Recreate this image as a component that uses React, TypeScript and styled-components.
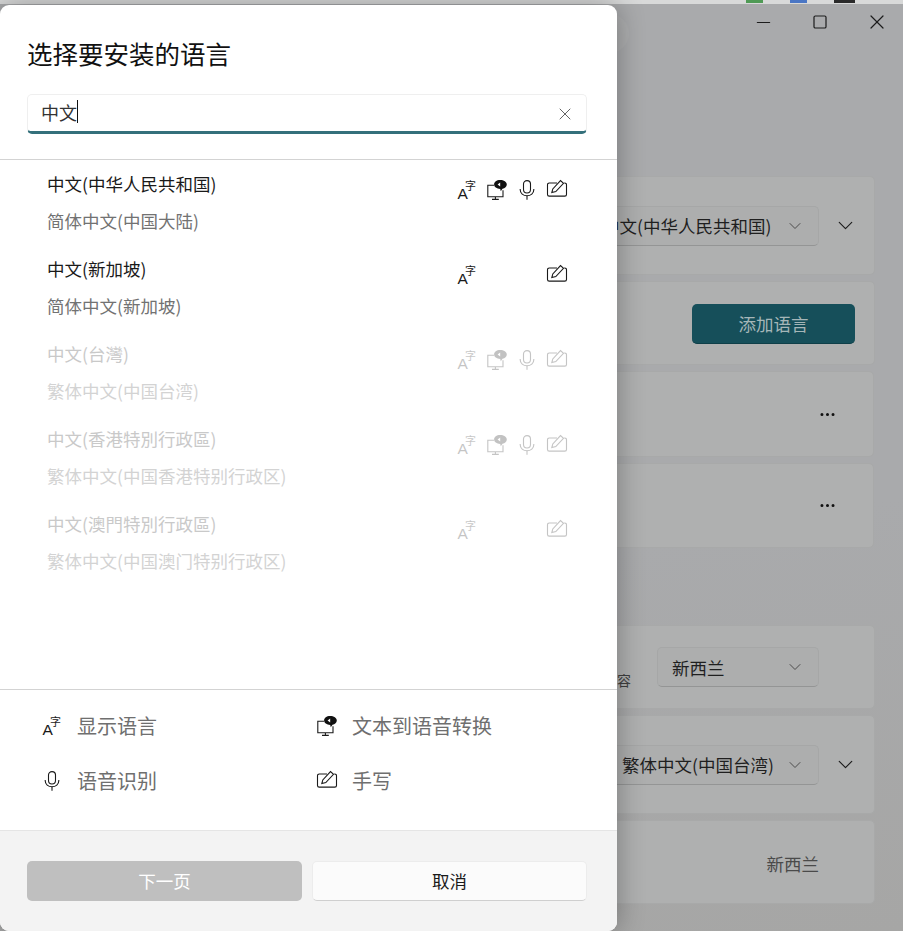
import { ChevronDown, Ellipsis, Minus, Square, X } from "lucide-react";
import styled, { createGlobalStyle } from "styled-components";

const GlobalStyle = createGlobalStyle`
  html, body {
    margin: 0;
    padding: 0;
    height: 100%;
    overflow: hidden;
    font-family: "Noto Sans CJK SC", "Liberation Sans", sans-serif;
  }
  * {
    box-sizing: border-box;
  }
`;

type Language = {
  name: string;
  sub: string;
  available: boolean;
  speech: boolean;
};

const languages: Language[] = [
  { name: "中文(中华人民共和国)", sub: "简体中文(中国大陆)", available: true, speech: true },
  { name: "中文(新加坡)", sub: "简体中文(新加坡)", available: true, speech: false },
  { name: "中文(台灣)", sub: "繁体中文(中国台湾)", available: false, speech: true },
  { name: "中文(香港特別行政區)", sub: "繁体中文(中国香港特别行政区)", available: false, speech: true },
  { name: "中文(澳門特別行政區)", sub: "繁体中文(中国澳门特别行政区)", available: false, speech: false },
];

function DisplayIcon() {
  return (
    <IconSvg width="20" height="20" viewBox="0 0 20 20">
      <text fill="#1a1a1a" fontFamily="Liberation Sans, Noto Sans CJK SC">
        <tspan x="0.5" y="19" fontSize="15.5">
          A
        </tspan>
        <tspan x="8" y="10" fontSize="11" fontFamily="Noto Sans CJK SC">
          字
        </tspan>
      </text>
    </IconSvg>
  );
}

function SpeechIcon() {
  return (
    <IconSvg width="20" height="20" viewBox="0 0 20 20" fill="none">
      <path d="M7 5.2H0.8v11.6h15.2v-6.5" stroke="#1a1a1a" strokeWidth="1.1" />
      <path d="M8.4 17v2M5 19.4h6.8" stroke="#1a1a1a" strokeWidth="1.1" />
      <path
        d="M13 0c3.9 0 6.8 2 6.8 4.5 0 2.1-1.9 3.7-4.3 4.2l-1.7 2.6-0.6-2.4c-3.4-0.1-6.1-2-6.1-4.4C7.100 2 9.600 0 13 0z"
        fill="#111"
      />
      <path d="M13.200 2.400v4.100l-2.600-2z" fill="#fff" />
    </IconSvg>
  );
}

function MicIcon() {
  return (
    <IconSvg width="20" height="20" viewBox="0 0 20 20" fill="none" stroke="#1a1a1a" strokeWidth="1.1">
      <rect x="6.5" y="0.6" width="7" height="12.4" rx="3.5" />
      <path d="M3.200 9v0.800c0 3.600 3 6 6.800 6s6.800-2.400 6.800-6V9" />
      <path d="M10 15.800v3.900" />
    </IconSvg>
  );
}

function HandwritingIcon() {
  return (
    <IconSvg width="20" height="20" viewBox="0 0 20 20" fill="none" stroke="#1a1a1a" strokeWidth="1.1">
      <path d="M10 3H2.200a1.700 1.700 0 0 0-1.700 1.700v9.700a1.700 1.700 0 0 0 1.700 1.700h15.600a1.700 1.700 0 0 0 1.700-1.700V4.700A1.700 1.700 0 0 0 17.800 3h-0.600" />
      <path d="M4.800 12.600l1-3.700 7.700-8.300 3 2.700-7.700 8.300z" />
    </IconSvg>
  );
}

export default function App() {
  return (
    <Screen>
      <GlobalStyle />
      <BrowserEdge>
        <EdgeChip $color="#4f9a55" $width={17} />
        <EdgeChip $color="#4a76c4" $width={17} />
        <EdgeChip $color="#2a2a2a" $width={21} />
      </BrowserEdge>

      <SettingsPage>
        <PageHeader>
          <BackCircle />
          <WindowControls>
            <ControlSlot>
              <Minus size={21} strokeWidth={1.4} />
            </ControlSlot>
            <ControlSlot>
              <Square size={16} strokeWidth={1.8} />
            </ControlSlot>
            <ControlSlot>
              <X size={24} strokeWidth={1.2} />
            </ControlSlot>
          </WindowControls>
        </PageHeader>

        <Card $height={99}>
          <FakeSelect $width={232}>
            中文(中华人民共和国)
            <ChevronDown size={20} strokeWidth={1.2} />
          </FakeSelect>
          <ExpandSlot>
            <ChevronDown size={25} strokeWidth={1.1} />
          </ExpandSlot>
        </Card>
        <Card $height={84}>
          <AddButton>添加语言</AddButton>
        </Card>
        <Card $height={86} $inset>
          <MoreSlot>
            <Ellipsis size={19} strokeWidth={1.8} />
          </MoreSlot>
        </Card>
        <Card $height={85} $inset>
          <MoreSlot>
            <Ellipsis size={19} strokeWidth={1.8} />
          </MoreSlot>
        </Card>

        <CardGap />

        <Card $height={84}>
          <SideHint>内容</SideHint>
          <FakeSelect $width={162}>
            新西兰
            <ChevronDown size={20} strokeWidth={1.2} />
          </FakeSelect>
          <ExpandSlot />
        </Card>
        <Card $height={99}>
          <FakeSelect $width={212}>
            繁体中文(中国台湾)
            <ChevronDown size={20} strokeWidth={1.2} />
          </FakeSelect>
          <ExpandSlot>
            <ChevronDown size={25} strokeWidth={1.1} />
          </ExpandSlot>
        </Card>
        <Card $height={84}>
          <PlainValue>新西兰</PlainValue>
          <ExpandSlot />
        </Card>
      </SettingsPage>

      <Dialog>
        <DialogHead>
          <Title>选择要安装的语言</Title>
          <SearchBox>
            <SearchText>中文</SearchText>
            <Caret />
            <ClearIcon>
              <X size={20} strokeWidth={1.1} />
            </ClearIcon>
          </SearchBox>
        </DialogHead>

        <LanguageList>
          {languages.map((lang) => (
            <LanguageRow key={lang.name}>
              <LanguageText>
                <LanguageName $disabled={!lang.available}>{lang.name}</LanguageName>
                <LanguageSub $disabled={!lang.available}>{lang.sub}</LanguageSub>
              </LanguageText>
              <IconGrid $disabled={!lang.available}>
                <DisplayIcon />
                <span>{lang.speech && <SpeechIcon />}</span>
                <span>{lang.speech && <MicIcon />}</span>
                <HandwritingIcon />
              </IconGrid>
            </LanguageRow>
          ))}
        </LanguageList>

        <Legend>
          <LegendItem>
            <DisplayIcon />
            显示语言
          </LegendItem>
          <LegendItem>
            <SpeechIcon />
            文本到语音转换
          </LegendItem>
          <LegendItem>
            <MicIcon />
            语音识别
          </LegendItem>
          <LegendItem>
            <HandwritingIcon />
            手写
          </LegendItem>
        </Legend>

        <DialogFooter>
          <NextButton>下一页</NextButton>
          <CancelButton>取消</CancelButton>
        </DialogFooter>
      </Dialog>
    </Screen>
  );
}

const IconSvg = styled.svg`
  display: block;
  flex-shrink: 0;
  overflow: visible;
`;

const Screen = styled.div`
  position: relative;
  width: 903px;
  height: 931px;
  overflow: hidden;
  background: linear-gradient(170deg, #a9aaac 0%, #a9aaac 60%, #a6a6a5 100%);
`;

const BrowserEdge = styled.div`
  height: 4px;
  padding-left: 746px;
  display: flex;
  gap: 27px;
  background: #d8d9d9;
`;

const EdgeChip = styled.div<{ $color: string; $width: number }>`
  width: ${(p) => p.$width}px;
  height: 3px;
  background: ${(p) => p.$color};
`;

const SettingsPage = styled.div`
  display: flex;
  flex-direction: column;
  gap: 6px;
  padding-right: 28px;
  padding-left: 100px;
`;

const PageHeader = styled.div`
  height: 166px;
  padding: 10px 0 0 490px;
  display: flex;
  justify-content: space-between;
  align-items: flex-start;
`;

const BackCircle = styled.div`
  width: 39px;
  height: 39px;
  border-radius: 50%;
  background: #adaeaf;
`;

const WindowControls = styled.div`
  margin: -4px -14px 0 0;
  display: flex;
  gap: 33px;
`;

const ControlSlot = styled.div`
  width: 24px;
  height: 24px;
  display: flex;
  justify-content: center;
  align-items: center;
  color: #1c1c1c;
`;

const Card = styled.div<{ $height: number; $inset?: boolean }>`
  height: ${(p) => p.$height}px;
  margin-right: ${(p) => (p.$inset ? 1 : 0)}px;
  padding: 0 19px 0 0;
  display: flex;
  justify-content: flex-end;
  align-items: center;
  background: #afb0b0;
  border: 1px solid #a8a9a9;
  border-radius: 5px;
`;

const CardGap = styled.div`
  height: 65px;
`;

const FakeSelect = styled.div<{ $width: number }>`
  width: ${(p) => p.$width}px;
  height: 40px;
  padding: 0 13px 0 14px;
  display: flex;
  justify-content: space-between;
  align-items: center;
  font-size: 17.5px;
  color: #1f1f1f;
  background: #adaeae;
  border: 1px solid #a6a7a7;
  border-bottom-color: #949595;
  border-radius: 5px;

  svg {
    flex-shrink: 0;
    color: #4c4c4c;
  }
`;

const ExpandSlot = styled.div`
  width: 20px;
  margin-left: 16px;
  display: flex;
  justify-content: center;
  color: #1c1c1c;

  svg {
    flex-shrink: 0;
  }
`;

const AddButton = styled.div`
  width: 163px;
  height: 40px;
  margin-top: 2px;
  display: flex;
  justify-content: center;
  align-items: center;
  font-size: 17.5px;
  color: #a5b6b8;
  background: #164f5a;
  border-bottom: 1px solid #0f3f48;
  border-radius: 5px;
`;

const MoreSlot = styled.div`
  margin-right: 17px;
  display: flex;
  color: #111;
`;

const SideHint = styled.div`
  align-self: flex-end;
  margin: 0 26px 18px 0;
  font-size: 14px;
  color: #3f3f3f;
`;

const PlainValue = styled.div`
  margin-top: 2px;
  font-size: 17.5px;
  color: #4a4a4a;
`;

const Dialog = styled.div`
  position: absolute;
  top: 5px;
  left: 0;
  width: 617px;
  height: 926px;
  display: flex;
  flex-direction: column;
  background: #fff;
  border-radius: 9px;
  overflow: hidden;
  box-shadow: 0 0 28px rgba(0, 0, 0, 0.32);
`;

const DialogHead = styled.div`
  height: 155px;
  padding: 29px 30px 0 27px;
  border-bottom: 1px solid #d3d3d3;
`;

const Title = styled.h1`
  margin: 0 0 23px;
  font-size: 25.5px;
  line-height: 37px;
  font-weight: 400;
  color: #111;
`;

const SearchBox = styled.div`
  position: relative;
  height: 40px;
  padding: 0 0 3px 13px;
  display: flex;
  align-items: center;
  background: #fff;
  border: 1px solid #efefef;
  border-bottom: 3px solid #34707b;
  border-radius: 5px;
`;

const SearchText = styled.span`
  font-size: 18px;
  color: #333;
`;

const Caret = styled.span`
  width: 1px;
  height: 23px;
  background: #111;
`;

const ClearIcon = styled.span`
  position: absolute;
  right: 11px;
  top: 9px;
  display: flex;
  color: #555;
`;

const LanguageList = styled.div`
  flex: 1;
  padding-top: 11px;
`;

const LanguageRow = styled.div`
  height: 85px;
  padding: 0 50px 0 47px;
  display: flex;
  justify-content: space-between;
`;

const LanguageText = styled.div`
  display: flex;
  flex-direction: column;
  gap: 11px;
`;

const LanguageName = styled.div<{ $disabled: boolean }>`
  font-size: 17.5px;
  line-height: 26px;
  color: ${(p) => (p.$disabled ? "#c9c9c9" : "#1a1a1a")};
`;

const LanguageSub = styled.div<{ $disabled: boolean }>`
  font-size: 17.5px;
  line-height: 26px;
  color: ${(p) => (p.$disabled ? "#d3d3d3" : "#727272")};
`;

const IconGrid = styled.div<{ $disabled: boolean }>`
  height: 20px;
  margin-top: 9px;
  display: grid;
  grid-template-columns: repeat(4, 20px);
  column-gap: 10px;
  opacity: ${(p) => (p.$disabled ? 0.25 : 1)};

  span {
    display: block;
    width: 20px;
    height: 20px;
  }
`;

const Legend = styled.div`
  height: 141px;
  padding: 8px 0 0 42px;
  display: grid;
  grid-template-columns: 275px 1fr;
  grid-auto-rows: 55px;
  border-top: 1px solid #d3d3d3;
`;

const LegendItem = styled.div`
  display: flex;
  align-items: center;
  gap: 15px;
  font-size: 20px;
  color: #6f6f6f;
`;

const DialogFooter = styled.div`
  height: 101px;
  padding: 30px 30px 0 27px;
  display: grid;
  grid-template-columns: 275px 275px;
  column-gap: 10px;
  align-content: start;
  background: #f3f3f3;
  border-top: 1px solid #e5e5e5;
`;

const NextButton = styled.div`
  height: 40px;
  padding-bottom: 2px;
  display: flex;
  justify-content: center;
  align-items: center;
  font-size: 17.5px;
  color: #fff;
  background: #bfbfbf;
  border-radius: 5px;
`;

const CancelButton = styled.div`
  height: 40px;
  padding-bottom: 2px;
  display: flex;
  justify-content: center;
  align-items: center;
  font-size: 17.5px;
  color: #1a1a1a;
  background: #fbfbfb;
  border: 1px solid #ececec;
  border-bottom-color: #cfcfcf;
  border-radius: 5px;
`;
